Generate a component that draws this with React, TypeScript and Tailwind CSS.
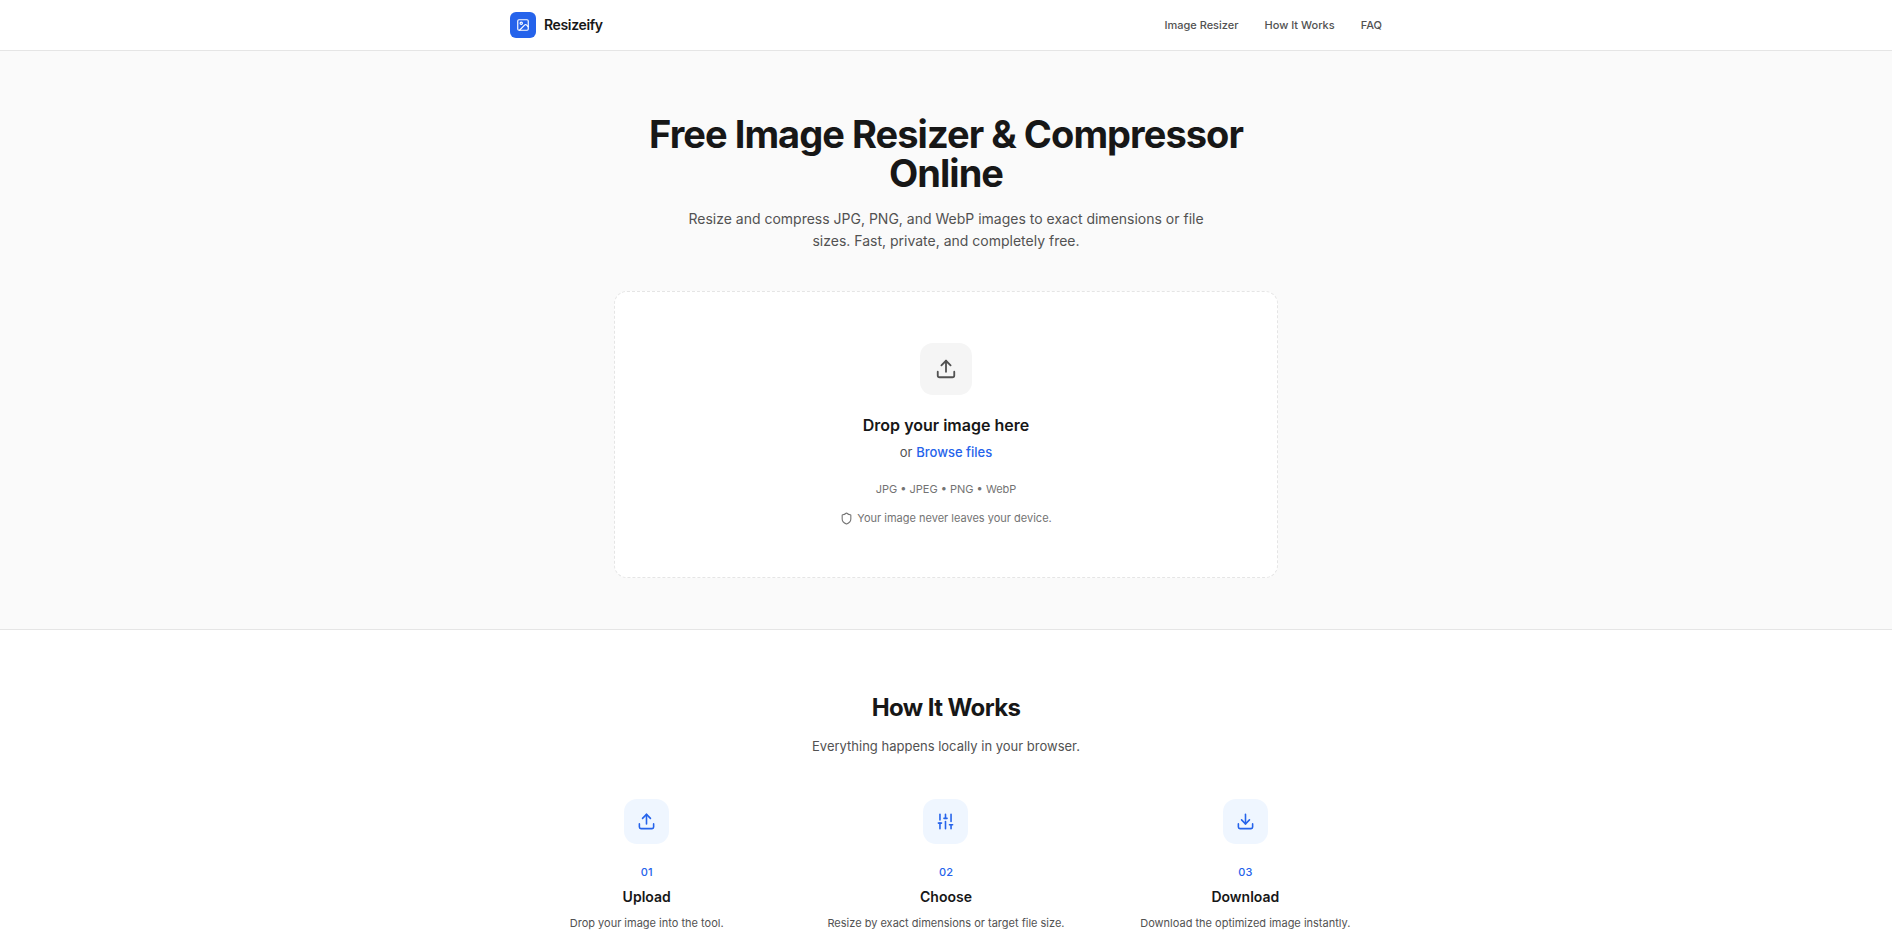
import React from 'react';
import { Download, Image, Shield, SlidersVertical, Upload } from 'lucide-react';

const links = [
  { label: 'Image Resizer', href: '#tool' },
  { label: 'How It Works', href: '#how' },
  { label: 'FAQ', href: '#faq' },
];

const steps = [
  { icon: Upload, num: '01', title: 'Upload', text: 'Drop your image into the tool.' },
  { icon: SlidersVertical, num: '02', title: 'Choose', text: 'Resize by exact dimensions or target file size.' },
  { icon: Download, num: '03', title: 'Download', text: 'Download the optimized image instantly.' },
];

export default function App() {
  return (
    <div className="bg-white font-[Inter,sans-serif] text-[#171717]">
      <header className="border-b border-[#e5e5e5] bg-white">
        <div className="mx-auto flex h-[50px] max-w-[920px] items-center justify-between px-6">
          <a href="#" className="flex items-center gap-2 text-sm font-semibold tracking-tight">
            <span className="flex size-[26px] items-center justify-center rounded-md bg-[#2563eb] text-white">
              <Image className="size-3.5" />
            </span>
            Resizeify
          </a>
          <nav className="flex gap-[26px] text-[11px] font-medium text-[#525252]">
            {links.map((l) => (
              <a key={l.label} href={l.href}>{l.label}</a>
            ))}
          </nav>
        </div>
      </header>

      <section id="tool" className="border-b border-[#e5e5e5] bg-[#fafafa] pt-16 pb-[51px]">
        <div className="mx-auto max-w-[664px]">
          <h1 className="text-center text-[38px] leading-[39px] font-bold tracking-tight">
            Free Image Resizer &amp; Compressor Online
          </h1>
          <p className="mx-auto mt-[15px] max-w-[538px] text-center text-[14px] leading-[22px] text-[#525252]">
            Resize and compress JPG, PNG, and WebP images to exact dimensions or file sizes. Fast, private, and completely free.
          </p>
          <div className="mt-[39px] flex flex-col items-center rounded-[13px] border border-dashed border-[#e5e5e5] bg-white py-[51px]">
            <span className="flex size-[52px] items-center justify-center rounded-[13px] bg-[#f5f5f5] text-[#525252]">
              <Upload className="size-[22px]" />
            </span>
            <h2 className="mt-[18px] text-base leading-6 font-semibold">Drop your image here</h2>
            <p className="mt-[5px] text-[13px] leading-5 text-[#525252]">
              or <button type="button" className="font-medium text-[#2563eb]">Browse files</button>
            </p>
            <p className="mt-[19px] text-[11px] leading-4 text-[#737373]">JPG • JPEG • PNG • WebP</p>
            <p className="mt-[13px] flex items-center gap-1 text-[11px] leading-4 text-[#737373]">
              <Shield className="size-[13px]" />
              Your image never leaves your device.
            </p>
          </div>
        </div>
      </section>

      <section id="how" className="bg-white pt-[62px]">
        <h2 className="text-center text-2xl leading-8 font-bold tracking-tight">How It Works</h2>
        <p className="mt-3 text-center text-[13px] leading-5 text-[#525252]">Everything happens locally in your browser.</p>
        <div className="mx-auto mt-[43px] grid max-w-[872px] grid-cols-3 gap-[26px]">
          {steps.map(({ icon: Icon, num, title, text }) => (
            <div key={num} className="flex flex-col items-center text-center">
              <span className="flex size-[45px] items-center justify-center rounded-[13px] bg-blue-50 text-[#2563eb]">
                <Icon className="size-[19px]" />
              </span>
              <span className="mt-5 text-[11px] leading-4 font-medium text-[#2563eb]">{num}</span>
              <h3 className="mt-[7px] text-sm leading-5 font-semibold">{title}</h3>
              <p className="mt-2 text-[11px] leading-4 text-[#525252]">{text}</p>
            </div>
          ))}
        </div>
      </section>
    </div>
  );
}
